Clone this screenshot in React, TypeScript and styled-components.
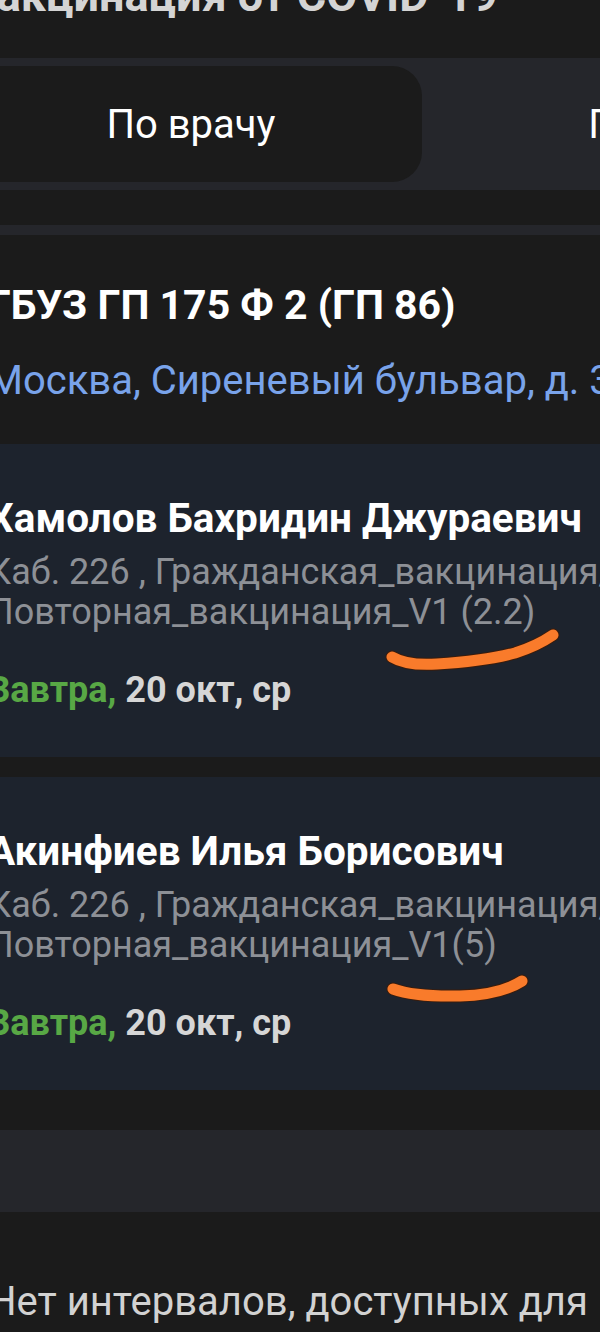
import React from "react";
import styled, { createGlobalStyle } from "styled-components";

const Global = createGlobalStyle`
  html, body {
    margin: 0;
    padding: 0;
    background: #1b1b1b;
    overflow: hidden;
  }
  body {
    font-family: Roboto, "Noto Sans", Arial, sans-serif;
    -webkit-font-smoothing: antialiased;
  }
`;

const Viewport = styled.div`
  width: 600px;
  height: 1332px;
  overflow: hidden;
  background: #1b1b1b;
`;

const Shell = styled.div`
  margin-left: -40px;
  width: 720px;
  display: flex;
  flex-direction: column;
`;

const PageTitle = styled.h1`
  margin: -30px 0 0 8px;
  font-size: 45px;
  line-height: 52px;
  font-weight: 700;
  color: #d4d4d4;
  white-space: nowrap;
`;

const SegmentBar = styled.div`
  margin-top: 36px;
  background: #25262b;
  padding: 8px 0;
  display: flex;
  gap: 8px;
`;

const Segment = styled.div<{ $active?: boolean }>`
  flex: 0 0 462px;
  height: 116px;
  border-radius: 30px;
  background: ${(p) => (p.$active ? "#1b1b1b" : "transparent")};
  display: flex;
  align-items: center;
  justify-content: center;
  font-size: 40px;
  color: #ffffff;
  white-space: nowrap;
`;

const Divider = styled.div<{ $h: number; $top: number }>`
  height: ${(p) => p.$h}px;
  margin-top: ${(p) => p.$top}px;
  background: #25262b;
`;

const ClinicBlock = styled.section`
  padding: 45px 28px 39px;
  background: #1b1b1b;
  display: flex;
  flex-direction: column;
`;

const ClinicName = styled.div`
  font-size: 41px;
  line-height: 50px;
  font-weight: 700;
  color: #ffffff;
  white-space: nowrap;
`;

const Address = styled.div`
  margin-top: 27px;
  font-size: 40px;
  line-height: 48px;
  color: #79a3ea;
  white-space: nowrap;
`;

const DoctorCard = styled.article<{ $gap?: number }>`
  position: relative;
  margin-top: ${(p) => p.$gap ?? 0}px;
  background: #1d232d;
  padding: 50px 28px 43px;
  display: flex;
  flex-direction: column;
`;

const DoctorName = styled.div`
  font-size: 40.5px;
  line-height: 48px;
  font-weight: 700;
  color: #ffffff;
  white-space: nowrap;
`;

const Meta = styled.div`
  margin-top: 10px;
  font-size: 36px;
  line-height: 40px;
  color: #8d9096;
  white-space: nowrap;
`;

const DateLine = styled.div`
  margin-top: 34px;
  font-size: 36px;
  line-height: 48px;
  font-weight: 700;
  color: #d6d6d6;
  white-space: nowrap;
`;

const Tomorrow = styled.span`
  color: #58a845;
`;

const Scribble = styled.svg<{ $left: number; $top: number }>`
  position: absolute;
  left: ${(p) => p.$left}px;
  top: ${(p) => p.$top}px;
  overflow: visible;
`;

const EmptyText = styled.div`
  margin-top: 66px;
  padding: 0 28px;
  width: 600px;
  font-size: 40px;
  line-height: 48px;
  color: #d2d2d2;
`;

type Doc = {
  name: string;
  meta2: string;
  gap: number;
  scribble: { left: number; top: number; w: number; h: number; d: string };
};

const doctors: Doc[] = [
  {
    name: "Хамолов Бахридин Джураевич",
    meta2: "Повторная_вакцинация_V1 (2.2)",
    gap: 0,
    scribble: {
      left: 425,
      top: 184,
      w: 180,
      h: 45,
      d: "M7 29 Q 22 38 52 36 Q 100 33 130 25 Q 152 18 168 7",
    },
  },
  {
    name: "Акинфиев Илья Борисович",
    meta2: "Повторная_вакцинация_V1(5)",
    gap: 20,
    scribble: {
      left: 425,
      top: 198,
      w: 145,
      h: 30,
      d: "M8 14 Q 30 22 75 21 Q 115 20 137 6",
    },
  },
];

export default function App() {
  return (
    <Viewport>
      <Global />
      <Shell>
        <PageTitle>Вакцинация от COVID-19</PageTitle>
        <SegmentBar>
          <Segment $active>По врачу</Segment>
          <Segment>По дате</Segment>
        </SegmentBar>
        <Divider $h={10} $top={35} />
        <ClinicBlock>
          <ClinicName>ГБУЗ ГП 175 Ф 2 (ГП 86)</ClinicName>
          <Address>Москва, Сиреневый бульвар, д. 30</Address>
        </ClinicBlock>
        {doctors.map((d) => (
          <DoctorCard key={d.name} $gap={d.gap}>
            <DoctorName>{d.name}</DoctorName>
            <Meta>
              Каб. 226 , Гражданская_вакцинация/
              <br />
              {d.meta2}
            </Meta>
            <DateLine>
              <Tomorrow>Завтра,</Tomorrow> 20 окт, ср
            </DateLine>
            <Scribble
              $left={d.scribble.left}
              $top={d.scribble.top}
              width={d.scribble.w}
              height={d.scribble.h}
              viewBox={`0 0 ${d.scribble.w} ${d.scribble.h}`}
            >
              <path
                d={d.scribble.d}
                fill="none"
                stroke="#3a1c0c"
                strokeWidth={13}
                strokeLinecap="round"
              />
              <path
                d={d.scribble.d}
                fill="none"
                stroke="#f97b2b"
                strokeWidth={11}
                strokeLinecap="round"
              />
            </Scribble>
          </DoctorCard>
        ))}
        <Divider $h={82} $top={40} />
        <EmptyText>Нет интервалов, доступных для записи</EmptyText>
      </Shell>
    </Viewport>
  );
}
